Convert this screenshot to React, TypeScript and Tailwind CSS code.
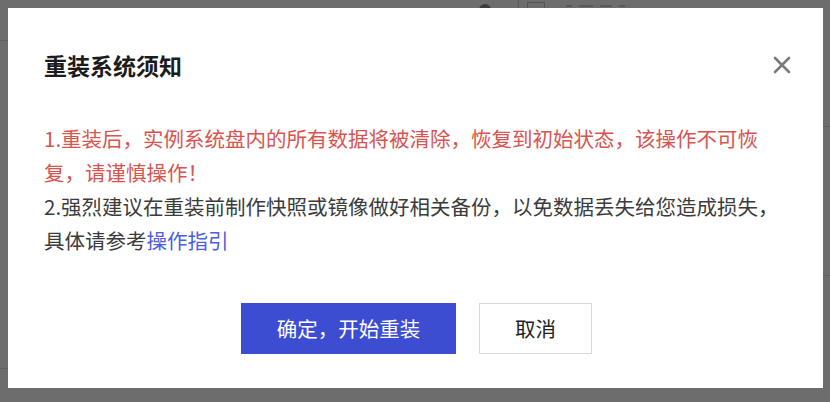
import React from "react";

export default function App() {
  return (
    <div
      className="relative h-[402px] w-[830px] overflow-hidden bg-[#6d6d6d] pl-[8px] pt-[8px]"
      style={{ fontFamily: '"Noto Sans CJK SC", "Noto Sans", sans-serif' }}
    >
      {/* dimmed background page hints */}
      <div className="absolute left-0 top-[40px] h-px w-[8px] bg-[#606060]" />
      <div className="absolute left-0 top-[368px] h-px w-[8px] bg-[#606060]" />
      <div className="absolute right-0 top-[126px] h-px w-[7px] bg-[#606060]" />
      <div className="absolute right-0 top-[275px] h-px w-[7px] bg-[#606060]" />
      <div className="absolute left-[479px] top-[4px] h-[12px] w-[12px] rounded-full bg-[#3c3c3c]" />
      <div className="absolute left-[518px] top-0 h-[8px] w-px bg-[#5a5a5a]" />
      <div className="absolute left-[527px] top-[2px] h-[14px] w-[18px] border border-[#555]" />
      <div className="absolute left-[566px] top-[5px] flex gap-[7px]">
        <div className="h-[2px] w-[6px] bg-[#585858]" />
        <div className="h-[2px] w-[14px] bg-[#5a5a5a]" />
        <div className="h-[2px] w-[12px] bg-[#5a5a5a]" />
        <div className="h-[2px] w-[6px] bg-[#5a5a5a]" />
      </div>

      <div className="relative flex h-[380px] w-[815px] flex-col bg-white pl-[36px] pr-[32px] pt-[41px]">
        <div className="flex h-[32px] items-center justify-between">
          <div className="text-[23px] font-bold leading-[32px] text-[#1b1b1b]">
            重装系统须知
          </div>
          <svg width="18" height="18" viewBox="0 0 18 18">
            <path d="M2 2 L16 16 M16 2 L2 16" stroke="#7a7a7a" strokeWidth="2.6" strokeLinecap="round" />
          </svg>
        </div>

        <div className="mt-[40px] text-[20.5px] leading-[34px]">
          <p className="whitespace-nowrap text-[#d9534f]">
            1.重装后，实例系统盘内的所有数据将被清除，恢复到初始状态，该操作不可恢
            <br />
            复，请谨慎操作！
          </p>
          <p className="whitespace-nowrap text-[#3b3b3b]">
            2.强烈建议在重装前制作快照或镜像做好相关备份，以免数据丢失给您造成损失，
            <br />
            具体请参考<span className="text-[#4a5de4]">操作指引</span>
          </p>
        </div>

        <div className="mt-[46px] flex justify-center gap-[23px] pr-[2px]">
          <button className="h-[51px] w-[215px] bg-[#3c4dd2] text-[20.5px] text-white">
            确定，开始重装
          </button>
          <button className="h-[51px] w-[113px] border border-[#d9d9d9] bg-white text-[20.5px] text-[#222]">
            取消
          </button>
        </div>
      </div>
    </div>
  );
}
